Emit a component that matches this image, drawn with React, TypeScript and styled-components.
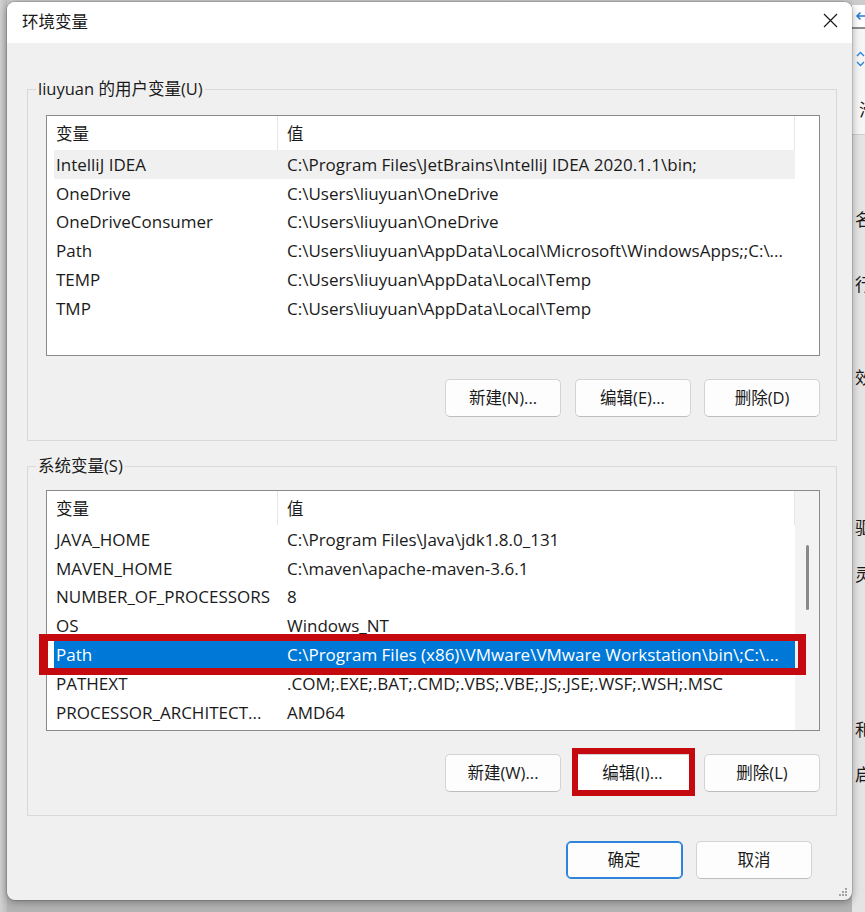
import React from "react";
import styled, { createGlobalStyle, css } from "styled-components";

const Global = createGlobalStyle`
  html, body { margin: 0; padding: 0; }
  body {
    font-family: "Open Sans", "Noto Sans CJK SC", sans-serif;
    color: #1a1a1a;
  }
  * { box-sizing: border-box; }
`;

const Screen = styled.div`
  width: 865px;
  height: 912px;
  overflow: hidden;
  display: flex;
  background: linear-gradient(180deg, #c9c9c9 0%, #b4b4b4 100%);
`;

const LeftStrip = styled.div`
  width: 7px;
  flex: none;
  background: linear-gradient(90deg, #d2d2d2 0%, #bdbdbd 100%);
`;

const Dialog = styled.div`
  width: 845px;
  height: 898px;
  margin-top: 2px;
  flex: none;
  position: relative;
  display: flex;
  flex-direction: column;
  background: #f0f0f0;
  border-radius: 8px;
  overflow: hidden;
  box-shadow: 0 2px 9px rgba(0, 0, 0, 0.35), 0 0 0 1px rgba(0, 0, 0, 0.12);
`;

const TitleBar = styled.div`
  height: 41px;
  flex: none;
  background: #ffffff;
  display: flex;
  align-items: center;
  justify-content: space-between;
  padding: 0 14px 4px 15px;
`;

const Title = styled.div`
  font-family: "Noto Sans CJK SC", sans-serif;
  font-size: 16.5px;
  line-height: 24px;
`;

const CloseIcon = styled.svg`
  display: block;
`;

const Body = styled.div`
  display: flex;
  flex-direction: column;
  padding: 34px 15px 0 20px;
`;

const Group = styled.fieldset<{ $gapTop?: number; $padTop?: number }>`
  margin: ${(p) => p.$gapTop ?? 0}px 0 0 0;
  min-width: 0;
  border: 1px solid #d9d9d9;
  padding: ${(p) => p.$padTop ?? 14}px 16px 23px 18px;
`;

const Legend = styled.legend`
  margin-left: -10px;
  padding: 0 2px;
  font-size: 16.5px;
  line-height: 24px;
`;

const ListBox = styled.div`
  height: 241px;
  border: 1px solid #8a8a8a;
  background: #ffffff;
  display: grid;
  grid-template-columns: 1fr 24px;
`;

const ListMain = styled.div`
  display: flex;
  flex-direction: column;
  padding-left: 7px;
  min-width: 0;
`;

const HeaderRow = styled.div`
  height: 34px;
  flex: none;
  display: grid;
  grid-template-columns: 224px 1fr;
  border-right: 1px solid #e6e6e6;
`;

const HeaderCell = styled.div<{ $first?: boolean }>`
  display: flex;
  align-items: center;
  padding-left: ${(p) => (p.$first ? 2 : 9)}px;
  font-family: "Noto Sans CJK SC", sans-serif;
  font-size: 16.5px;
  ${(p) => p.$first && css`border-right: 1px solid #e6e6e6;`}
`;

type RowState = "normal" | "hover" | "selected";

const DataRow = styled.div<{ $state: RowState; $marked?: boolean }>`
  height: 28.8px;
  flex: none;
  position: relative;
  display: grid;
  grid-template-columns: 224px 1fr;
  font-size: 17px;
  background: ${(p) =>
    p.$state === "selected" ? "#0078d7" : p.$state === "hover" ? "#f0f0f0" : "transparent"};
  color: ${(p) => (p.$state === "selected" ? "#ffffff" : "#1a1a1a")};
  ${(p) =>
    p.$marked &&
    css`
      &::after {
        content: "";
        position: absolute;
        top: -6.6px;
        bottom: -5.6px;
        left: -15px;
        right: -11px;
        border-style: solid;
        border-color: #c4090f;
        border-width: 7px 8px 7px 9px;
        pointer-events: none;
      }
    `}
`;

const Cell = styled.div<{ $first?: boolean }>`
  display: flex;
  align-items: center;
  padding-left: ${(p) => (p.$first ? 2 : 9)}px;
  white-space: nowrap;
  overflow: hidden;
`;

const Track = styled.div<{ $active?: boolean }>`
  background: ${(p) => (p.$active ? "#f3f3f3" : "#ffffff")};
  display: flex;
  justify-content: center;
  padding-top: 54px;
`;

const Thumb = styled.div`
  width: 3px;
  height: 65px;
  border-radius: 2px;
  background: #8a8a8a;
`;

const ButtonRow = styled.div<{ $top: number; $right?: number }>`
  display: flex;
  justify-content: flex-end;
  gap: 13.5px;
  margin-top: ${(p) => p.$top}px;
  padding-right: ${(p) => p.$right ?? 0}px;
`;

const Button = styled.button<{ $primary?: boolean; $marked?: boolean; $w?: number }>`
  width: ${(p) => p.$w ?? 116}px;
  height: 38px;
  position: relative;
  border-radius: 5px;
  border: 1px solid #d3d3d3;
  border-bottom-color: #bdbdbd;
  background: #fdfdfd;
  font-family: "Open Sans", "Noto Sans CJK SC", sans-serif;
  font-size: 16.5px;
  color: #1a1a1a;
  padding: 0 0 2px 0;
  ${(p) =>
    p.$primary &&
    css`
      border: 1px solid #2f83d8;
      box-shadow: inset 0 0 0 1px #2f83d8;
    `}
  ${(p) =>
    p.$marked &&
    css`
      background: #ffffff;
      &::after {
        content: "";
        position: absolute;
        top: -7px;
        bottom: -5px;
        left: -4px;
        right: -5px;
        border: 6px solid #c4090f;
        pointer-events: none;
      }
    `}
`;

const Grip = styled.svg`
  position: absolute;
  right: 4px;
  bottom: 3px;
`;

const BgStrip = styled.div`
  flex: 1;
  display: flex;
  flex-direction: column;
  overflow: hidden;
  background: #e4e4e4;
  font-family: "Noto Sans CJK SC", sans-serif;
  font-size: 17px;
  line-height: 20px;
`;

const BgTop = styled.div`
  height: 5px;
  background: #cdcdcd;
`;

const BgNav = styled.div`
  height: 24px;
  background: #ffffff;
  border-bottom: 2px solid #8e8e8e;
  padding-left: 3px;
  display: flex;
  align-items: center;
`;

const BgPane = styled.div`
  height: 106px;
  background: #f6f6f6;
  border-bottom: 1px solid #cfcfcf;
  display: flex;
  flex-direction: column;
  gap: 4px;
  padding: 22px 0 0 4px;
  color: #1a1a1a;
`;

const BgIcon = styled.svg`
  display: block;
  flex: none;
`;

const BgGlyph = styled.div<{ $mt: number }>`
  margin-top: ${(p) => p.$mt}px;
  padding-left: 3px;
  height: 20px;
  white-space: nowrap;
  color: #1a1a1a;
`;

type Row = { name: string; value: string; state?: RowState; marked?: boolean };

const userRows: Row[] = [
  { name: "IntelliJ IDEA", value: "C:\\Program Files\\JetBrains\\IntelliJ IDEA 2020.1.1\\bin;", state: "hover" },
  { name: "OneDrive", value: "C:\\Users\\liuyuan\\OneDrive" },
  { name: "OneDriveConsumer", value: "C:\\Users\\liuyuan\\OneDrive" },
  { name: "Path", value: "C:\\Users\\liuyuan\\AppData\\Local\\Microsoft\\WindowsApps;;C:\\..." },
  { name: "TEMP", value: "C:\\Users\\liuyuan\\AppData\\Local\\Temp" },
  { name: "TMP", value: "C:\\Users\\liuyuan\\AppData\\Local\\Temp" },
];

const systemRows: Row[] = [
  { name: "JAVA_HOME", value: "C:\\Program Files\\Java\\jdk1.8.0_131" },
  { name: "MAVEN_HOME", value: "C:\\maven\\apache-maven-3.6.1" },
  { name: "NUMBER_OF_PROCESSORS", value: "8" },
  { name: "OS", value: "Windows_NT" },
  { name: "Path", value: "C:\\Program Files (x86)\\VMware\\VMware Workstation\\bin\\;C:\\...", state: "selected", marked: true },
  { name: "PATHEXT", value: ".COM;.EXE;.BAT;.CMD;.VBS;.VBE;.JS;.JSE;.WSF;.WSH;.MSC" },
  { name: "PROCESSOR_ARCHITECT...", value: "AMD64" },
];

function VarList({ rows, scroll }: { rows: Row[]; scroll?: boolean }) {
  return (
    <ListBox>
      <ListMain>
        <HeaderRow>
          <HeaderCell $first>变量</HeaderCell>
          <HeaderCell>值</HeaderCell>
        </HeaderRow>
        {rows.map((r) => (
          <DataRow key={r.name} $state={r.state ?? "normal"} $marked={r.marked}>
            <Cell $first>{r.name}</Cell>
            <Cell>{r.value}</Cell>
          </DataRow>
        ))}
      </ListMain>
      <Track $active={scroll}>{scroll && <Thumb />}</Track>
    </ListBox>
  );
}

export default function App() {
  return (
    <>
      <Global />
      <Screen>
        <LeftStrip />
        <Dialog>
          <TitleBar>
            <Title>环境变量</Title>
            <CloseIcon width="15" height="15" viewBox="0 0 15 15">
              <path d="M1 1L14 14M14 1L1 14" stroke="#1a1a1a" strokeWidth="1.2" fill="none" />
            </CloseIcon>
          </TitleBar>
          <Body>
            <Group>
              <Legend>liuyuan 的用户变量(U)</Legend>
              <VarList rows={userRows} />
              <ButtonRow $top={23}>
                <Button>新建(N)...</Button>
                <Button>编辑(E)...</Button>
                <Button>删除(D)</Button>
              </ButtonRow>
            </Group>
            <Group $gapTop={13} $padTop={12}>
              <Legend>系统变量(S)</Legend>
              <VarList rows={systemRows} scroll />
              <ButtonRow $top={23}>
                <Button>新建(W)...</Button>
                <Button $marked>编辑(I)...</Button>
                <Button>删除(L)</Button>
              </ButtonRow>
            </Group>
            <ButtonRow $top={25} $right={25}>
              <Button $primary $w={117}>确定</Button>
              <Button>取消</Button>
            </ButtonRow>
          </Body>
          <Grip width="10" height="10" viewBox="0 0 10 10">
            {[
              [8, 2],
              [5, 5],
              [8, 5],
              [2, 8],
              [5, 8],
              [8, 8],
            ].map(([x, y]) => (
              <rect key={`${x}-${y}`} x={x - 1} y={y - 1} width="2" height="2" fill="#a3a3a3" />
            ))}
          </Grip>
        </Dialog>
        <BgStrip>
          <BgTop />
          <BgNav>
            <BgIcon width="12" height="10" viewBox="0 0 12 10">
              <path d="M11 5H2M5.5 1.5L2 5l3.5 3.5" stroke="#1f7ad6" strokeWidth="1.5" fill="none" />
            </BgIcon>
          </BgNav>
          <BgPane>
            <BgIcon width="9" height="6" viewBox="0 0 9 6">
              <path d="M1 5L4.5 1.5 8 5" stroke="#2b86d8" strokeWidth="1.4" fill="none" />
            </BgIcon>
            <BgIcon width="9" height="6" viewBox="0 0 9 6">
              <path d="M1 1l3.5 3.5L8 1" stroke="#2b86d8" strokeWidth="1.4" fill="none" />
            </BgIcon>
            <BgGlyph $mt={28}>滑</BgGlyph>
          </BgPane>
          <BgGlyph $mt={74}>名</BgGlyph>
          <BgGlyph $mt={45}>行</BgGlyph>
          <BgGlyph $mt={73}>效</BgGlyph>
          <BgGlyph $mt={130}>驱</BgGlyph>
          <BgGlyph $mt={27}>灵</BgGlyph>
          <BgGlyph $mt={135}>和</BgGlyph>
          <BgGlyph $mt={25}>启</BgGlyph>
        </BgStrip>
      </Screen>
    </>
  );
}
